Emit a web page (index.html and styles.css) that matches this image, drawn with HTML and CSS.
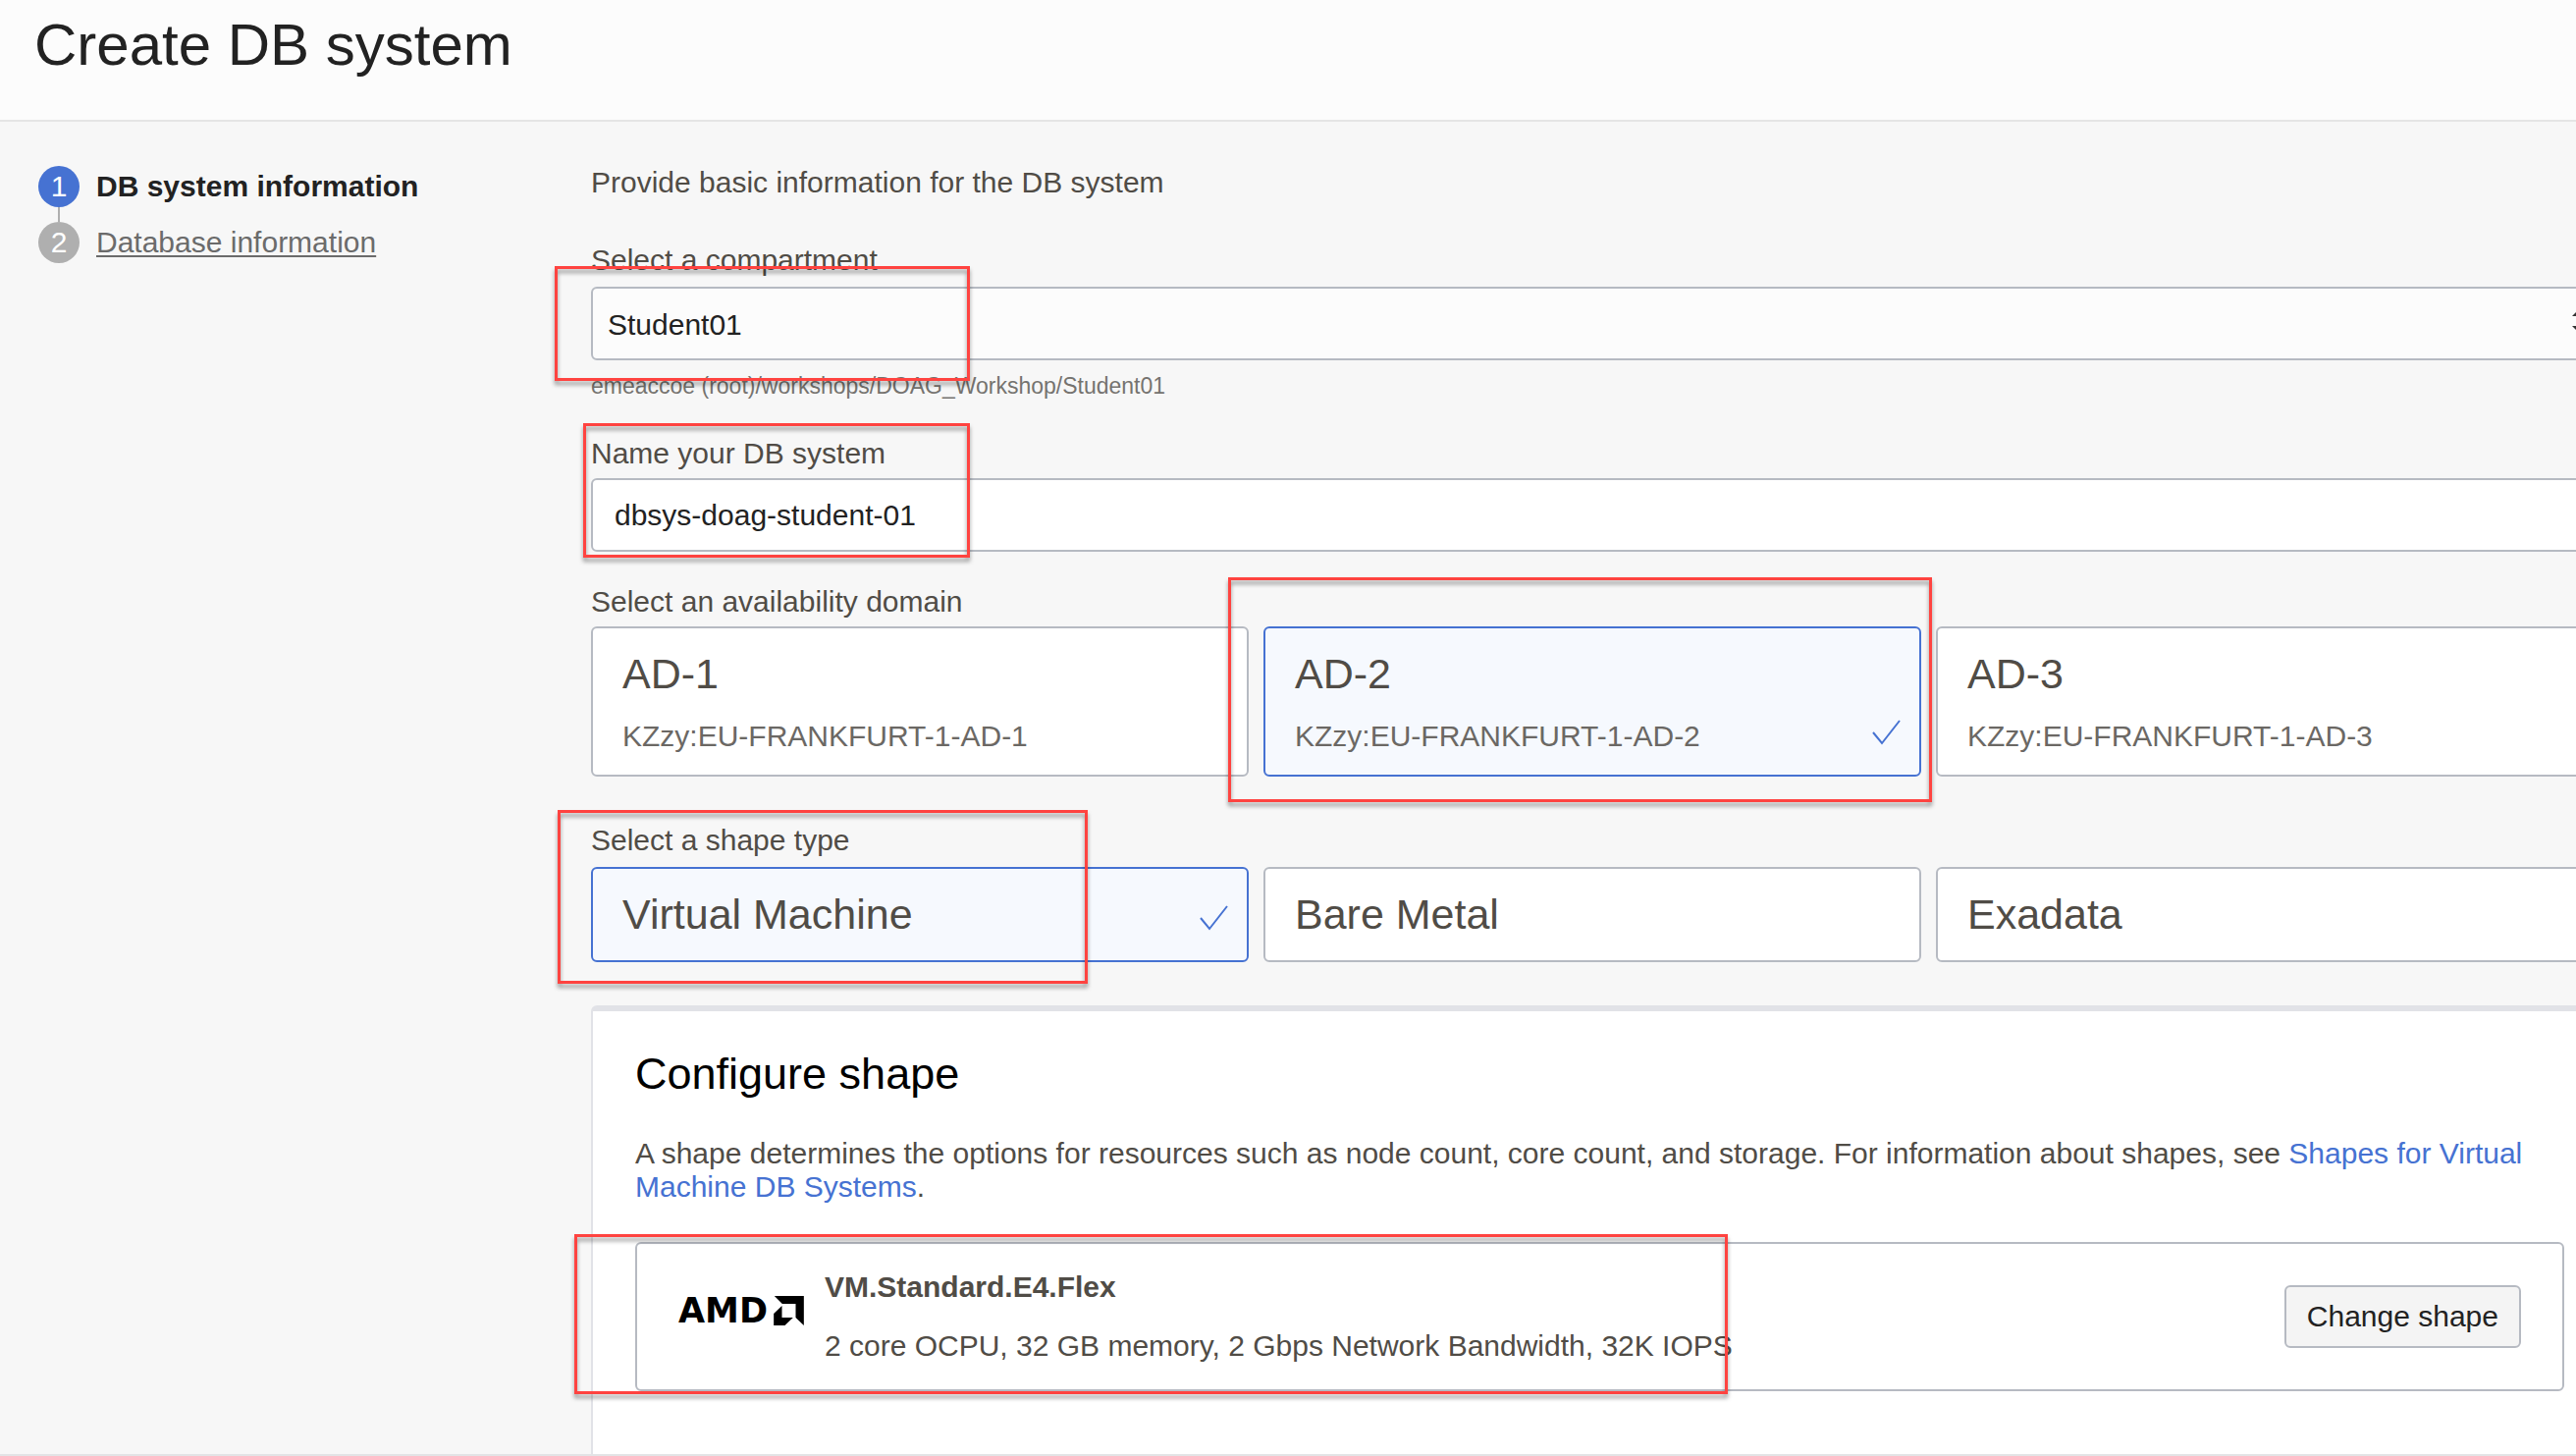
FILE: index.html
```html
<!DOCTYPE html>
<html lang="en">
<head>
<meta charset="utf-8">
<title>Create DB system</title>
<link rel="stylesheet" href="styles.css">
</head>
<body>
<header class="page-header">
  <h1 class="page-title">Create DB system</h1>
</header>

<main class="layout">
  <nav class="steps" aria-label="Steps">
    <ol class="step-list">
      <li class="step step-current" aria-current="step"><span class="step-number">1</span><span>DB system information</span></li>
      <li class="step"><span class="step-number">2</span><a class="step-link" href="#database">Database information</a></li>
    </ol>
  </nav>

  <form class="form">
    <p class="intro">Provide basic information for the DB system</p>

    <div class="field field-compartment">
      <label class="label" for="compartment">Select a compartment</label>
      <div class="select-wrap">
        <select class="control select" id="compartment"><option>Student01</option></select>
        <svg class="select-icon" viewBox="0 0 14 24" aria-hidden="true"><path d="M0 7 7 0l7 7zM0 17h14l-7 7z"/></svg>
      </div>
      <p class="hint">emeaccoe (root)/workshops/DOAG_Workshop/Student01</p>
      <span class="mark mark-compartment"></span>
    </div>

    <div class="field field-name">
      <label class="label" for="name">Name your DB system</label>
      <input class="control input" id="name" type="text" value="dbsys-doag-student-01">
      <span class="mark mark-name"></span>
    </div>

    <div class="field field-domain" role="radiogroup" aria-labelledby="domain-label">
      <span class="label" id="domain-label">Select an availability domain</span>
      <div class="cards">
        <label class="card">
          <input class="card-radio" type="radio" name="domain">
          <span class="card-text"><span class="card-title">AD-1</span><span class="card-sub">KZzy:EU-FRANKFURT-1-AD-1</span></span>
        </label>
        <label class="card">
          <input class="card-radio" type="radio" name="domain" checked>
          <span class="card-text"><span class="card-title">AD-2</span><span class="card-sub">KZzy:EU-FRANKFURT-1-AD-2</span></span>
          <svg class="check" viewBox="0 0 30 26" aria-hidden="true"><path d="M1 13 10 24 28 1"/></svg>
          <span class="mark mark-domain"></span>
        </label>
        <label class="card">
          <input class="card-radio" type="radio" name="domain">
          <span class="card-text"><span class="card-title">AD-3</span><span class="card-sub">KZzy:EU-FRANKFURT-1-AD-3</span></span>
        </label>
      </div>
    </div>

    <div class="field field-type" role="radiogroup" aria-labelledby="type-label">
      <span class="label" id="type-label">Select a shape type</span>
      <div class="cards">
        <label class="card">
          <input class="card-radio" type="radio" name="type" checked>
          <span class="card-text"><span class="card-title">Virtual Machine</span></span>
          <svg class="check" viewBox="0 0 30 26" aria-hidden="true"><path d="M1 13 10 24 28 1"/></svg>
        </label>
        <label class="card">
          <input class="card-radio" type="radio" name="type">
          <span class="card-text"><span class="card-title">Bare Metal</span></span>
        </label>
        <label class="card">
          <input class="card-radio" type="radio" name="type">
          <span class="card-text"><span class="card-title">Exadata</span></span>
        </label>
      </div>
      <span class="mark mark-type"></span>
    </div>

    <section class="panel">
      <h2 class="panel-title">Configure shape</h2>
      <p class="panel-text">A shape determines the options for resources such as node count, core count, and storage. For information about shapes, see <a class="link" href="#shapes">Shapes for Virtual Machine DB Systems</a>.</p>
      <div class="shape">
        <div class="logo">
          <span>AMD</span>
          <svg class="logo-arrow" viewBox="0 0 92 90" aria-hidden="true"><path d="M2 0H92V90L67 66V24H26ZM25 30V66H59L34 90H0V54Z"/></svg>
        </div>
        <div class="shape-info">
          <strong>VM.Standard.E4.Flex</strong>
          <span>2 core OCPU, 32 GB memory, 2 Gbps Network Bandwidth, 32K IOPS</span>
        </div>
        <button class="button" type="button">Change shape</button>
        <span class="mark mark-shape"></span>
      </div>
    </section>
  </form>
</main>
</body>
</html>
```
FILE: styles.css
```css
* {
  box-sizing: border-box;
}

body {
  margin: 0;
  min-height: 100vh;
  display: flex;
  flex-direction: column;
  overflow-x: hidden;
  background: #f7f7f7;
  border-bottom: 2px solid #e3e4e6;
  color: #504c46;
  font: 30px/34px "Liberation Sans", Arial, sans-serif;
}

h1,
h2,
p,
ol {
  margin: 0;
  padding: 0;
  font-weight: normal;
}

.page-header {
  padding: 12px 35px 42px;
  background: #fcfcfc;
  border-bottom: 2px solid #e5e5e5;
}

.page-title {
  color: #222;
  font-size: 60px;
  line-height: 68px;
}

.layout {
  flex: 1;
  display: grid;
  grid-template-columns: 563px 1fr;
  padding: 45px 0 0 39px;
}

/* Step navigation */
.step-list {
  display: flex;
  flex-direction: column;
  gap: 15px;
  list-style: none;
}

.step {
  position: relative;
  display: flex;
  align-items: center;
  gap: 17px;
}

.step-current {
  color: #222;
  font-weight: bold;
}

.step-number {
  width: 42px;
  border-radius: 50%;
  background: #afafaf;
  color: #fff;
  font-weight: normal;
  line-height: 42px;
  text-align: center;
}

.step-current .step-number {
  background: #4672d2;
}

.step-current::after {
  content: "";
  position: absolute;
  top: 100%;
  left: 20px;
  width: 2px;
  height: 15px;
  background: #afafaf;
}

.step-link {
  color: #6b6b6b;
  text-decoration-thickness: 2px;
  text-underline-offset: 3px;
}

/* The form runs slightly past the right edge of the window */
.form {
  display: flex;
  flex-direction: column;
  margin-right: -18px;
}

.intro {
  margin-bottom: 45px;
}

.field {
  position: relative;
  display: flex;
  flex-direction: column;
  gap: 8px;
}

.field-compartment {
  gap: 10px;
  margin-bottom: 38px;
}

.field-name {
  margin-bottom: 34px;
}

.field-domain {
  margin-bottom: 48px;
}

.field-type {
  gap: 10px;
  margin-bottom: 44px;
}

.control {
  width: 100%;
  height: 75px;
  margin: 0;
  border: 2px solid #b6bac2;
  border-radius: 6px;
  color: #222;
  font: inherit;
}

.select-wrap {
  position: relative;
  display: flex;
}

.select {
  appearance: none;
  padding: 2px 15px 0;
  background: #fcfcfc;
}

.select-icon {
  position: absolute;
  top: 23px;
  right: 8px;
  width: 14px;
  height: 24px;
  fill: #333;
}

.input {
  padding: 0 22px;
  background: #fff;
}

.hint {
  padding-top: 2px;
  color: #75736f;
  font-size: 23px;
  line-height: 28px;
}

/* Selectable cards */
.cards {
  display: grid;
  grid-template-columns: repeat(3, 1fr);
  gap: 15px;
}

.card {
  position: relative;
  display: flex;
  align-items: flex-end;
  justify-content: space-between;
  padding: 21px 18px 22px 30px;
  border: 2px solid #b6bac2;
  border-radius: 6px;
  background: #fff;
}

.card:has(:checked) {
  border-color: #4672d2;
  background: #f6f9fe;
}

.card-radio {
  position: absolute;
  margin: 0;
  opacity: 0;
}

.card-text {
  display: flex;
  flex-direction: column;
  gap: 22px;
}

.card-title {
  font-size: 43px;
  line-height: 50px;
}

.card-sub {
  color: #6b6864;
}

.check {
  width: 30px;
  height: 26px;
  margin-bottom: 8px;
  fill: none;
  stroke: #4672d2;
  stroke-width: 2;
}

/* Configure shape panel */
.panel {
  flex: 1;
  padding: 38px 28px 62px 43px;
  border: 2px solid #e1e2e7;
  border-width: 6px 2px 0;
  border-radius: 6px 6px 0 0;
  background: #fff;
}

.panel-title {
  color: #000;
  font-size: 45px;
  line-height: 52px;
}

.panel-text {
  margin: 38px 0 39px;
}

.link {
  color: #4672d2;
  text-decoration: none;
}

.shape {
  position: relative;
  display: flex;
  align-items: center;
  padding: 27px 42px;
  border: 2px solid #b6bac2;
  border-radius: 6px;
}

.logo {
  display: flex;
  align-items: center;
  gap: 6px;
  padding-bottom: 12px;
  color: #000;
  font: bold 35px/34px "DejaVu Sans", sans-serif;
}

.logo-arrow {
  width: 31px;
  height: 30px;
}

.shape-info {
  flex: 1;
  display: flex;
  flex-direction: column;
  gap: 26px;
  margin-left: 21px;
}

.button {
  padding: 13px 21px;
  border: 2px solid #b6bac2;
  border-radius: 6px;
  background: #f4f4f4;
  color: #222;
  font: inherit;
}

/* Red highlight frames laid over the form */
.mark {
  position: absolute;
  border: 3px solid #ff4340;
  filter: drop-shadow(0 4px 2px rgba(0, 0, 0, 0.4));
  pointer-events: none;
}

.mark-compartment {
  top: 23px;
  left: -37px;
  width: 423px;
  height: 117px;
}

.mark-name {
  top: -14px;
  left: -8px;
  width: 394px;
  height: 137px;
}

.mark-domain {
  inset: -52px -13px -28px -38px;
}

.mark-type {
  top: -14px;
  left: -34px;
  width: 540px;
  height: 177px;
}

.mark-shape {
  top: -10px;
  left: -64px;
  width: 1175px;
  height: 163px;
}
```
